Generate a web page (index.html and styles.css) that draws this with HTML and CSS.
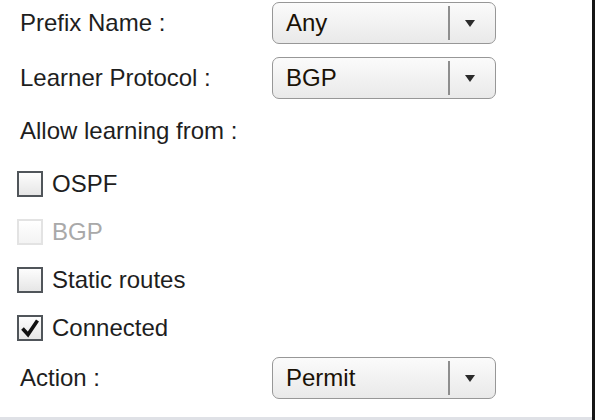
FILE: index.html
```html
<!DOCTYPE html>
<html>
<head>
<meta charset="utf-8">
<link rel="stylesheet" href="styles.css">
</head>
<body>
<div class="frame">
  <form class="panel">
    <div class="row row-select">
      <span class="label">Prefix Name :</span>
      <div class="select"><span class="value">Any</span><span class="divider"></span><span class="arrow"></span></div>
    </div>
    <div class="row row-select second">
      <span class="label">Learner Protocol :</span>
      <div class="select"><span class="value">BGP</span><span class="divider"></span><span class="arrow"></span></div>
    </div>
    <div class="row row-text">
      <span class="label">Allow learning from :</span>
    </div>
    <div class="checks">
      <label class="check"><span class="box"></span><span class="ctext">OSPF</span></label>
      <label class="check disabled"><span class="box"></span><span class="ctext">BGP</span></label>
      <label class="check"><span class="box"></span><span class="ctext">Static routes</span></label>
      <label class="check"><span class="box checked"><svg viewBox="0 0 20 20" width="20" height="20"><path d="M2.5 10.5 L8 16.5 L17.5 2.5" fill="none" stroke="#111" stroke-width="3.6" stroke-linejoin="miter" stroke-linecap="butt"/></svg></span><span class="ctext">Connected</span></label>
    </div>
    <div class="row row-select action">
      <span class="label">Action :</span>
      <div class="select"><span class="value">Permit</span><span class="divider"></span><span class="arrow"></span></div>
    </div>
  </form>
  <div class="bottom-strip"></div>
</div>
</body>
</html>
```

FILE: styles.css
```css
html, body {
  margin: 0;
  padding: 0;
  background: #ffffff;
}
body {
  font-family: "Liberation Sans", Arial, Helvetica, sans-serif;
  font-size: 24px;
  color: #1e1e1e;
}
.frame {
  width: 592px;
  height: 420px;
  border-right: 3px solid #161616;
  display: flex;
  flex-direction: column;
  box-sizing: content-box;
}
.panel {
  flex: 1;
  display: flex;
  flex-direction: column;
  padding: 2px 0 0 0;
  margin: 0;
}
.bottom-strip {
  height: 3px;
  background: #dfe1e6;
}
.row {
  display: flex;
  align-items: center;
  padding-left: 20px;
}
.row-select {
  height: 42px;
}
.row-select.second {
  margin-top: 13px;
}
.row-text {
  height: 42px;
  margin-top: 11px;
}
.row-select.action {
  margin-top: 5px;
}
.label {
  width: 252px;
  flex: none;
}
.select {
  width: 224px;
  height: 42px;
  box-sizing: border-box;
  border: 1.5px solid #979797;
  border-radius: 7px;
  background: linear-gradient(#fbfbfb, #e9e9e9);
  display: flex;
  align-items: center;
}
.value {
  flex: 1;
  padding-left: 13px;
  color: #1a1206;
}
.divider {
  width: 2px;
  align-self: stretch;
  margin: 3px 0;
  background: #8e8e8e;
}
.arrow {
  width: 39px;
  padding-right: 6px;
  display: flex;
  justify-content: center;
}
.arrow::before {
  content: "";
  width: 0;
  height: 0;
  border-left: 5.5px solid transparent;
  border-right: 5.5px solid transparent;
  border-top: 7px solid #2b2b2b;
}
.checks {
  margin-top: 8px;
  display: flex;
  flex-direction: column;
}
.check {
  height: 48px;
  display: flex;
  align-items: center;
  padding-left: 17px;
}
.box {
  width: 26px;
  height: 26px;
  box-sizing: border-box;
  border: 2px solid #50555a;
  background: linear-gradient(#fdfdfd, #e6e6e6);
  display: flex;
  align-items: center;
  justify-content: center;
  flex: none;
}
.ctext {
  margin-left: 9px;
}
.check.disabled .box {
  border-color: #e3e3e3;
  background: linear-gradient(#ffffff, #f3f3f3);
}
.check.disabled .ctext {
  color: #a9a9a9;
}
```
